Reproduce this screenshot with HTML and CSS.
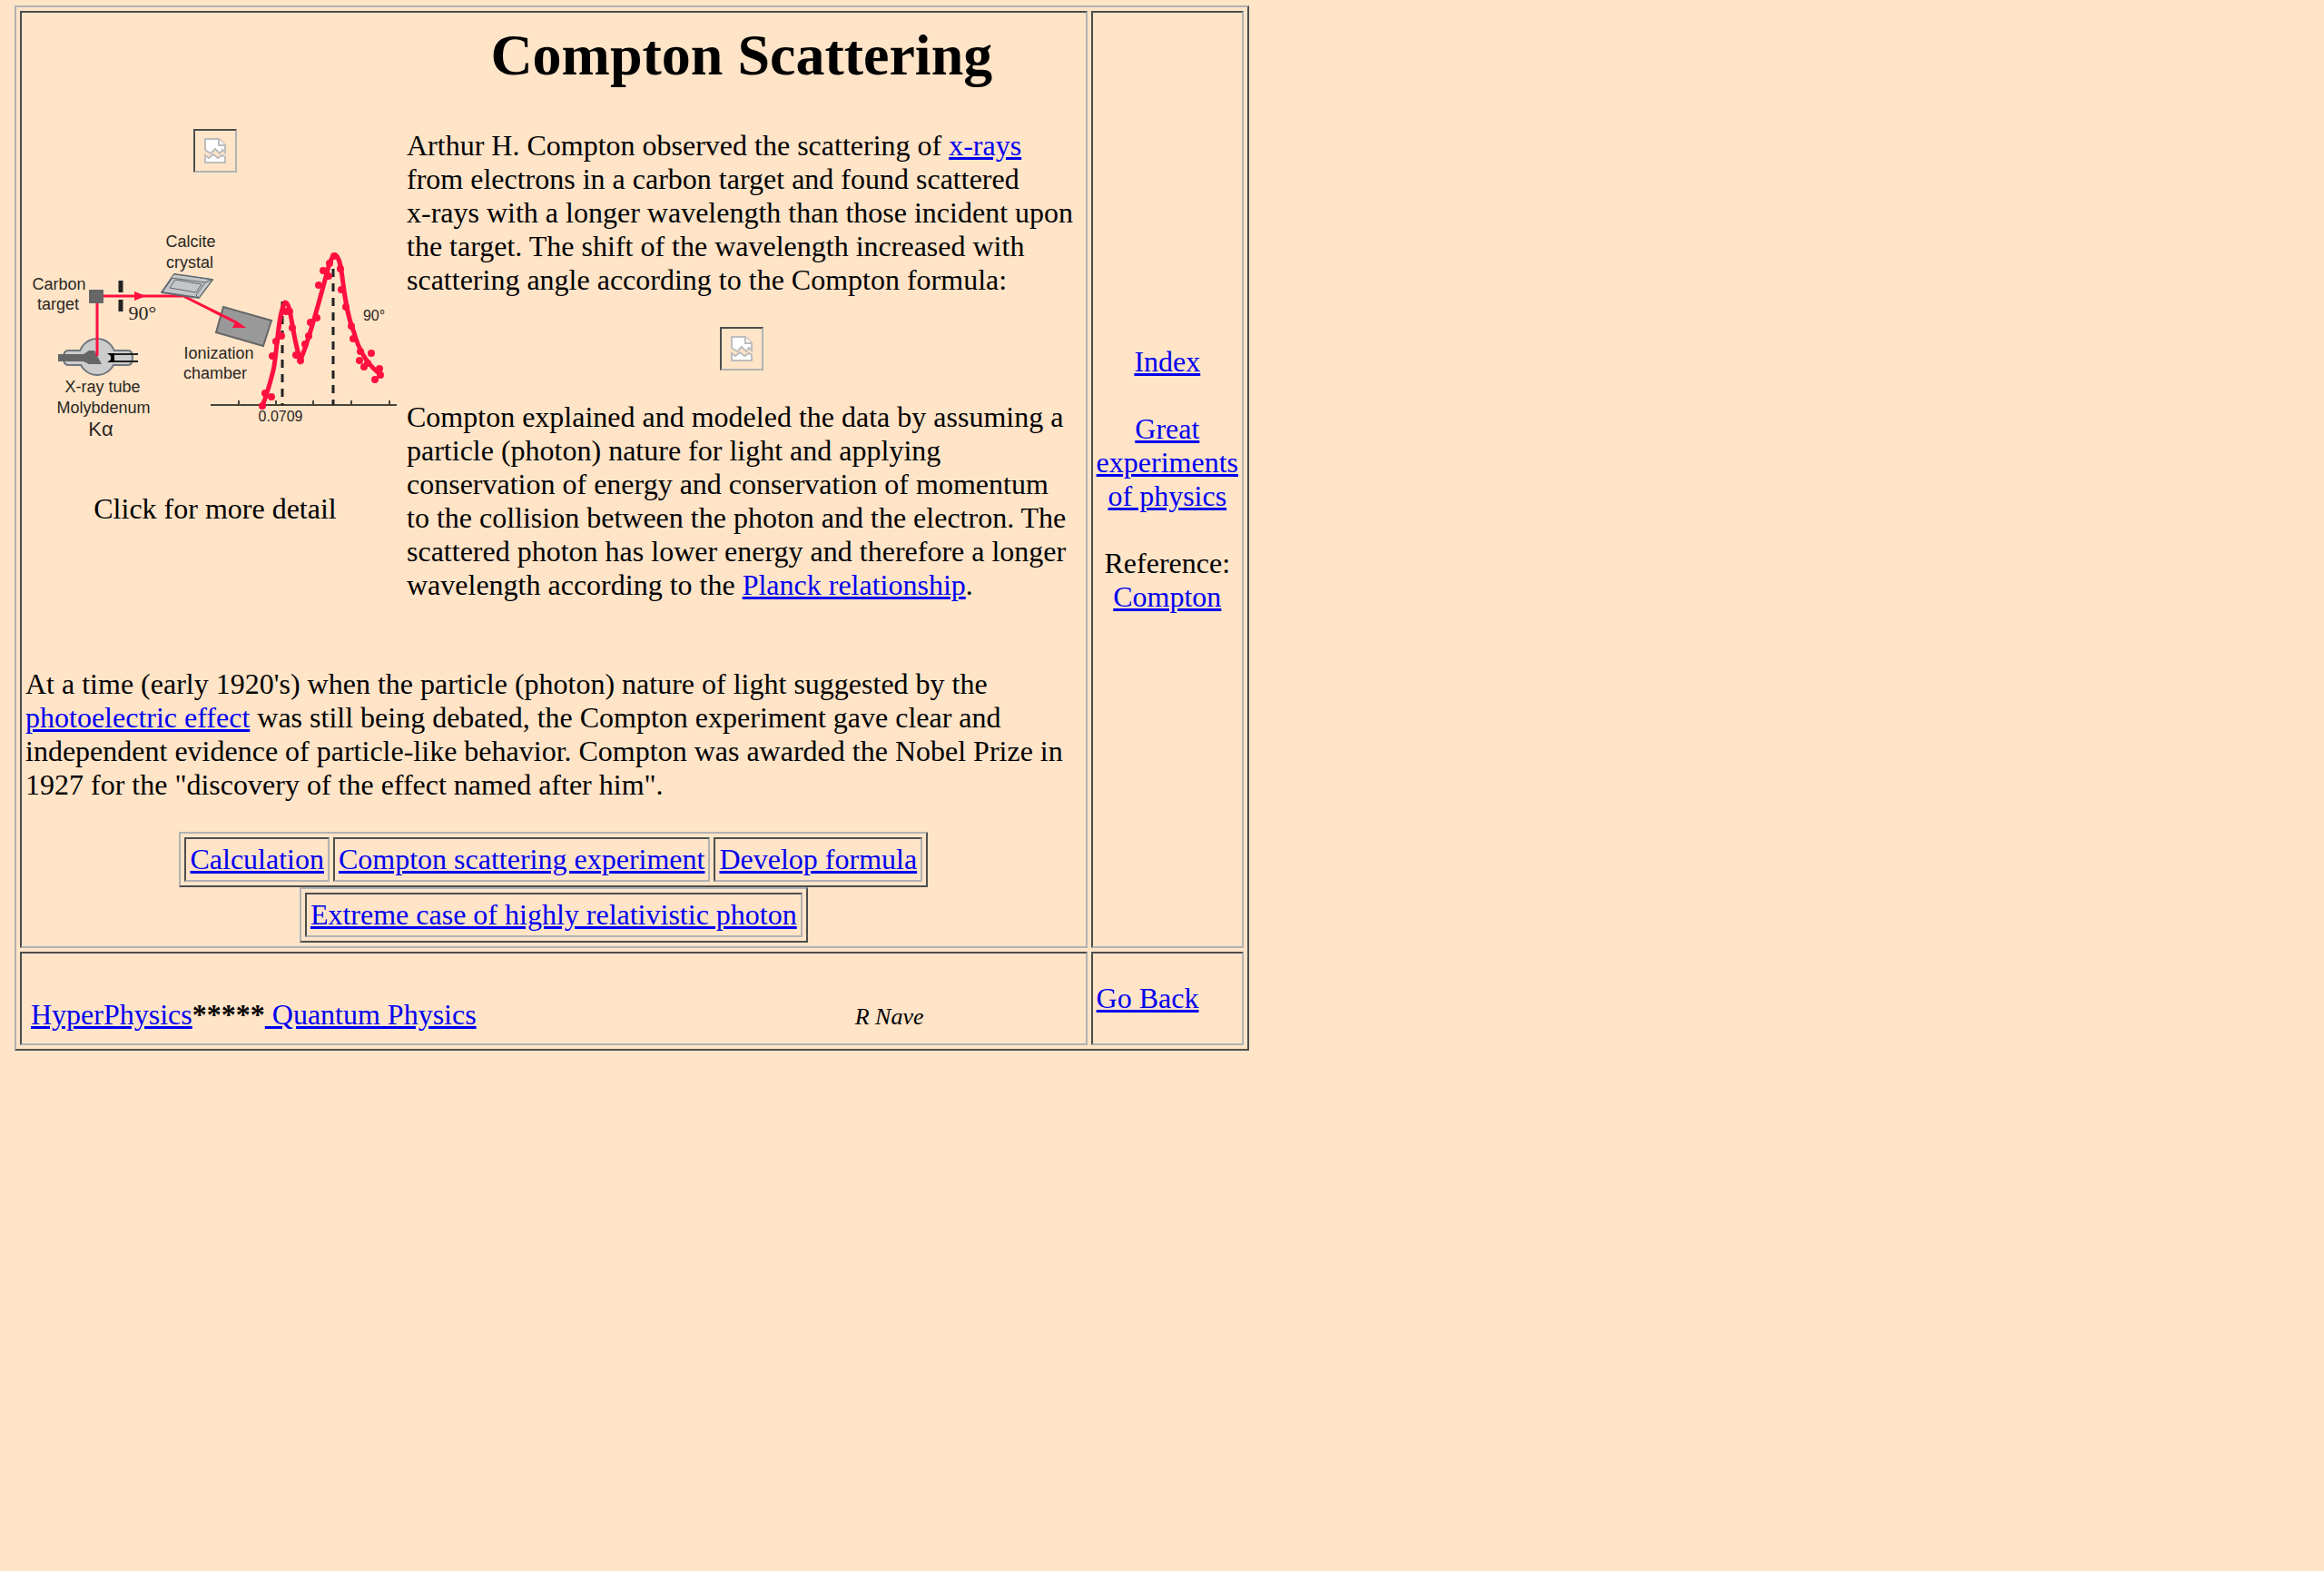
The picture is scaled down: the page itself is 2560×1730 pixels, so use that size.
FILE: index.html
```html
<!DOCTYPE html>
<html lang="en">
<head>
<meta charset="utf-8">
<title>Compton Scattering</title>
<link rel="stylesheet" href="styles.css">
</head>
<body>
<svg class="defs" aria-hidden="true">
  <symbol id="missing" viewBox="0 0 44 44">
    <g fill="#fff" stroke="#bdbdbd" stroke-width="2">
      <path d="M11 9H26L33 16V24L30 21L27 25L22 20L17 25L11 21Z"/>
      <path d="M26 9V16H33"/>
      <path d="M11 35V27L15 30L20 26L25 30L30 27L33 29V35Z"/>
    </g>
  </symbol>
</svg>
<table class="page">
  <tr>
    <td class="main">
      <div class="intro">
        <div class="picture">
          <svg class="missing" role="img" aria-label="Experiment"><use href="#missing"/></svg>
          <svg class="diagram" viewBox="34 222 406 288" role="img" aria-label="X-ray scattering apparatus and 90 degree spectrum">
            <g fill="#ccc" stroke="#6f767a" stroke-width="2">
              <path d="M75 386H141Q146 386 146 394Q146 402 141 402H75Q70 402 70 394Q70 386 75 386Z"/>
              <circle cx="107" cy="393" r="20"/>
              <path d="M80 387H134V401H80Z" stroke="none"/>
            </g>
            <path d="M64 390H92L98 386H104L112 401H98L92 398H64Z" fill="#666"/>
            <path d="M122 390H152M122 398H152" stroke="#222" stroke-width="2"/>
            <path d="M118 389H126V399H118L122 396V392Z" fill="#000"/>
            <path d="M107 392V334M114 326H202L264 357" fill="none" stroke="#ff1040" stroke-width="3"/>
            <rect x="98" y="319" width="16" height="15" fill="#666"/>
            <path d="M148 321L161 326L148 331Z" fill="#ff1040"/>
            <path d="M133 309V322M133 330V343" stroke="#222" stroke-width="5"/>
            <g fill="#c4c6c8" stroke="#5f686e" stroke-width="2" stroke-linejoin="round">
              <path d="M178 322L192 302L234 308L219 328Z"/>
              <path d="M192 302L234 308L226 311L188 306Z" stroke-width="1"/>
              <path d="M234 308L219 328L216 325L226 311Z" stroke-width="1"/>
              <path d="M187 317L193 308L222 313L216 322Z" stroke-width="1"/>
            </g>
            <path d="M246 338L299 353L290 381L238 366Z" fill="#999" stroke="#666" stroke-width="2"/>
            <path d="M232 341L260 355" stroke="#ff1040" stroke-width="3"/>
            <path d="M260 353L271 361L256 361Z" fill="#ff1040"/>
            <path d="M232 446H437M263 441V446M304 441V446M345 441V446M387 441V446M429 441V446" stroke="#4a4338" stroke-width="2"/>
            <path d="M311 332V446M367 296V446" stroke="#222" stroke-width="3" stroke-dasharray="9 7"/>
            <path d="M289 447C293 437 297 424 301 408S306 345 314 333C321 332 322 374 331 396C340 377 354 323 361 297Q366 279 370 281C379 287 376 333 390 366Q398 397 420 413" fill="none" stroke="#ff1040" stroke-width="5"/>
            <path d="M289 447h0M292 433h0M299 437h0M300 392h0M304 376h0M310 370h0M315 343h0M319 343h0M322 361h0M326 391h0M331 397h0M336 379h0M340 370h0M342 355h0M349 350h0M351 314h0M356 298h0M362 304h0M363 290h0M368 282h0M375 296h0M376 319h0M381 338h0M387 359h0M389 373h0M397 387h0M396 397h0M401 404h0M405 400h0M409 389h0M413 418h0M418 406h0M419 413h0" fill="none" stroke="#ff1040" stroke-width="8" stroke-linecap="round"/>
            <g class="labels">
              <text x="210" y="272">Calcite</text>
              <text x="209" y="295">crystal</text>
              <text x="65" y="319">Carbon</text>
              <text x="64" y="341">target</text>
              <text x="241" y="395">Ionization</text>
              <text x="237" y="417">chamber</text>
              <text x="113" y="432">X-ray tube</text>
              <text x="114" y="455">Molybdenum</text>
              <text x="111" y="480" class="k">Kα</text>
              <text x="157" y="352" class="angle">90°</text>
              <text x="412" y="353" class="small">90°</text>
              <text x="309" y="464" class="small">0.0709</text>
            </g>
          </svg>
          <div>Click for more detail</div>
        </div>
        <div class="story">
          <h1>Compton Scattering</h1>
          <p>Arthur H. Compton observed the scattering of <a href="#xrays">x-rays</a> from electrons in a carbon target and found scattered <span class="keep">x-rays</span> with a longer wavelength than those incident upon the target. The shift of the wavelength increased with scattering angle according to the Compton formula:</p>
          <svg class="missing" role="img" aria-label="Compton formula"><use href="#missing"/></svg>
          <p>Compton explained and modeled the data by assuming a particle (photon) nature for light and applying conservation of energy and conservation of momentum to the collision between the photon and the electron. The scattered photon has lower energy and therefore a longer wavelength according to the <a href="#planck">Planck relationship</a>.</p>
        </div>
      </div>
      <p>At a time (early 1920's) when the particle (photon) nature of light suggested by the <a href="#photoelectric">photoelectric effect</a> was still being debated, the Compton experiment gave clear and independent evidence of particle-like behavior. Compton was awarded the Nobel Prize in 1927 for the "discovery of the effect named after him".</p>
      <table class="links">
        <tr>
          <td><a href="#calculation">Calculation</a></td>
          <td><a href="#experiment">Compton scattering experiment</a></td>
          <td><a href="#formula">Develop formula</a></td>
        </tr>
      </table>
      <table class="links">
        <tr><td><a href="#extreme">Extreme case of highly relativistic photon</a></td></tr>
      </table>
    </td>
    <td class="side"><a href="#index">Index</a><br><br><a href="#great">Great experiments of physics</a><br><br>Reference:<br><a href="#compton">Compton</a></td>
  </tr>
  <tr>
    <td>
      <div class="footer">
        <div><br><a href="#hyperphysics">HyperPhysics</a><b>*****</b><a href="#quantum">&nbsp;Quantum Physics</a></div>
        <div class="author">R Nave</div>
      </div>
    </td>
    <td><a href="#back">Go Back</a></td>
  </tr>
</table>
</body>
</html>
```
FILE: styles.css
```css
body {
  margin: 6px 16px;
  background: #ffe4c8;
  color: #000;
  font-family: "Liberation Serif", "Times New Roman", serif;
  font-size: 32px;
  line-height: 37px;
}

a {
  color: #0000ee;
}

p {
  margin: 33px 0;
}

h1 {
  margin: 0 0 44px;
  font-size: 64px;
  line-height: 74px;
  text-align: center;
}

table {
  border: 2px solid;
  border-color: #b2b2b2 #4d4d4d #4d4d4d #b2b2b2;
  border-spacing: 4px;
}

td {
  padding: 4px;
  border: 2px solid;
  border-color: #4d4d4d #b2b2b2 #b2b2b2 #4d4d4d;
}

.defs {
  position: absolute;
  width: 0;
  height: 0;
}

.page {
  width: 100%;
  max-width: 1360px;
}

.side {
  width: 156px;
  text-align: center;
}

.intro {
  display: grid;
  grid-template-columns: 406px 1fr;
  gap: 8px;
  align-items: center;
  padding: 6px;
}

.picture {
  display: flex;
  flex-direction: column;
  align-items: center;
  gap: 32px;
}

.missing {
  display: block;
  box-sizing: border-box;
  width: 48px;
  height: 48px;
  margin: 0 auto;
  border: 2px solid;
  border-color: #4d4d4d #b2b2b2 #b2b2b2 #4d4d4d;
}

.diagram {
  width: 100%;
}

.labels {
  fill: #2b2722;
  font-family: "Liberation Sans", Arial, sans-serif;
  font-size: 18px;
  text-anchor: middle;
}

.labels .k {
  font-size: 22px;
}

.labels .angle {
  font-family: "Liberation Serif", serif;
  font-size: 22px;
}

.labels .small {
  font-size: 16px;
}

.keep {
  white-space: nowrap;
}

.links {
  margin: 0 auto;
}

.footer {
  display: grid;
  grid-template-columns: 1fr 412px;
  align-items: last baseline;
  padding: 6px;
  line-height: 38px;
}

.author {
  font-size: 26px;
  font-style: italic;
  text-align: center;
}
```
